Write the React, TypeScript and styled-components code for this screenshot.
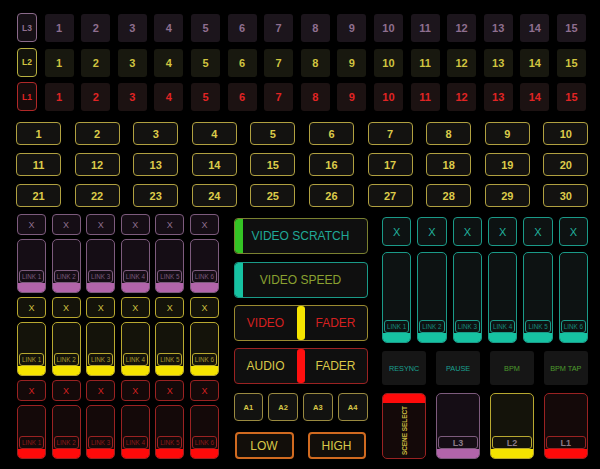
import React from "react";
import styled, { createGlobalStyle } from "styled-components";

interface Tone {
  border: string;
  bg: string;
  fill: string;
  text: string;
  dim: string;
}

const tones: Record<string, Tone> = {
  purple: { border: "#7d5b7d", bg: "#150d15", fill: "#b264aa", text: "#8f6f8f", dim: "#7a5a7a" },
  yellow: { border: "#b8a830", bg: "#14130a", fill: "#f5e400", text: "#cfc040", dim: "#a89a30" },
  red: { border: "#9a2222", bg: "#140909", fill: "#ff0a0a", text: "#d42020", dim: "#8e1a1a" },
  teal: { border: "#1a9a88", bg: "#0d1212", fill: "#16c2a2", text: "#20b09c", dim: "#178a7a" },
};

const rowTones = [
  { key: "L3", cell: "#1c151c", text: "#8f6f8f", border: "#8a6a8a", lbg: "#150f15" },
  { key: "L2", cell: "#18180f", text: "#d0c440", border: "#b8b040", lbg: "#13130b" },
  { key: "L1", cell: "#1c1212", text: "#e02424", border: "#b02828", lbg: "#150b0b" },
];

const GlobalStyle = createGlobalStyle`
  html, body {
    margin: 0;
    padding: 0;
    background: #000;
  }
  body {
    font-family: "Liberation Sans", Arial, sans-serif;
  }
`;

const Page = styled.div`
  width: 600px;
  height: 469px;
  box-sizing: border-box;
  padding: 13px 12px 0 17px;
  background: #000;
  overflow: hidden;
`;

const LayerGrid = styled.div`
  width: 569px;
  display: grid;
  grid-template-columns: 20px repeat(15, 29px);
  column-gap: 7.6px;
  row-gap: 5.5px;
  grid-auto-rows: 29px;
`;

const LayerButton = styled.div<{ $border: string; $bg: string; $color: string }>`
  box-sizing: border-box;
  border: 1.5px solid ${(p) => p.$border};
  border-radius: 4px;
  background: ${(p) => p.$bg};
  color: ${(p) => p.$color};
  font-size: 8.5px;
  font-weight: bold;
  display: flex;
  align-items: center;
  justify-content: center;
`;

const Cell = styled.div<{ $bg: string; $color: string }>`
  margin-top: 1px;
  height: 28px;
  border-radius: 3px;
  background: ${(p) => p.$bg};
  color: ${(p) => p.$color};
  font-size: 11px;
  font-weight: bold;
  display: flex;
  align-items: center;
  justify-content: center;
`;

const NumberGrid = styled.div`
  margin: 11px 0 0 -1px;
  width: 572px;
  display: grid;
  grid-template-columns: repeat(10, 45px);
  column-gap: 13.6px;
  row-gap: 8px;
  grid-auto-rows: 23px;
`;

const NumberButton = styled.div`
  box-sizing: border-box;
  border: 1.5px solid #b0a040;
  border-radius: 4px;
  background: #131210;
  color: #dccb4a;
  font-size: 11px;
  font-weight: bold;
  display: flex;
  align-items: center;
  justify-content: center;
`;

const Lower = styled.div`
  margin-top: 7px;
  width: 571px;
  display: grid;
  grid-template-columns: 202px 134px 206px;
  column-gap: 14.5px;
  align-items: start;
`;

const LeftCol = styled.div`
  display: flex;
  flex-direction: column;
  gap: 4px;
`;

const StripRow = styled.div<{ $cols: number; $gap: number }>`
  display: grid;
  grid-template-columns: repeat(${(p) => p.$cols}, 1fr);
  column-gap: ${(p) => p.$gap}px;
`;

const XButton = styled.div<{ $tone: Tone; $h: number }>`
  height: ${(p) => p.$h}px;
  box-sizing: border-box;
  border: 1px solid ${(p) => p.$tone.border};
  border-radius: 4px;
  background: ${(p) => p.$tone.bg};
  color: ${(p) => p.$tone.text};
  font-size: ${(p) => (p.$h > 25 ? 11 : 9)}px;
  display: flex;
  align-items: center;
  justify-content: center;
`;

const FaderBox = styled.div<{ $tone: Tone; $h: number }>`
  height: ${(p) => p.$h}px;
  box-sizing: border-box;
  border: 1px solid ${(p) => p.$tone.border};
  border-radius: 5px;
  background: ${(p) => p.$tone.bg};
  display: flex;
  flex-direction: column;
  justify-content: flex-end;
  overflow: hidden;
`;

const Handle = styled.div<{ $tone: Tone; $big?: boolean }>`
  margin: 0 1px;
  height: 13px;
  box-sizing: border-box;
  border: 1px solid ${(p) => p.$tone.border};
  border-radius: 3px;
  color: ${(p) => (p.$big ? "#8a7a88" : p.$tone.dim)};
  font-size: ${(p) => (p.$big ? 9 : 6.3)}px;
  font-weight: ${(p) => (p.$big ? "bold" : "normal")};
  display: flex;
  align-items: center;
  justify-content: center;
  white-space: nowrap;
`;

const Fill = styled.div<{ $tone: Tone }>`
  height: 9px;
  flex-shrink: 0;
  background: ${(p) => p.$tone.fill};
`;

const MidCol = styled.div`
  padding-top: 4px;
  display: flex;
  flex-direction: column;
`;

const WideButton = styled.div<{ $border: string; $mt: number }>`
  margin-top: ${(p) => p.$mt}px;
  height: 36px;
  box-sizing: border-box;
  border: 1.5px solid ${(p) => p.$border};
  border-radius: 4px;
  background: #0f0f0f;
  display: flex;
  align-items: stretch;
  overflow: hidden;
`;

const SideBar = styled.div<{ $color: string }>`
  width: 8px;
  flex-shrink: 0;
  background: ${(p) => p.$color};
  border-radius: 3px 0 0 3px;
`;

const CenterBar = styled.div<{ $color: string }>`
  width: 8px;
  flex-shrink: 0;
  background: ${(p) => p.$color};
  border-radius: 3px;
`;

const ButtonLabel = styled.div<{ $color: string; $offset?: boolean }>`
  flex: 1;
  padding-right: ${(p) => (p.$offset ? 8 : 0)}px;
  color: ${(p) => p.$color};
  font-size: 12px;
  display: flex;
  align-items: center;
  justify-content: center;
  white-space: nowrap;
`;

const SmallRow = styled.div`
  margin-top: 9px;
  display: grid;
  grid-template-columns: repeat(4, 1fr);
  column-gap: 5px;
`;

const SmallButton = styled.div`
  height: 28px;
  box-sizing: border-box;
  border: 1.5px solid #9a8a40;
  border-radius: 4px;
  background: #121210;
  color: #d8c848;
  font-size: 7.5px;
  font-weight: bold;
  display: flex;
  align-items: center;
  justify-content: center;
`;

const RangeRow = styled.div`
  margin-top: 11px;
  padding: 0 2px 0 1px;
  display: grid;
  grid-template-columns: 59px 58px;
  justify-content: space-between;
`;

const RangeButton = styled.div`
  height: 27px;
  box-sizing: border-box;
  border: 2px solid #d06a20;
  border-radius: 4px;
  background: #120e0a;
  color: #d8c848;
  font-size: 12px;
  display: flex;
  align-items: center;
  justify-content: center;
`;

const RightCol = styled.div`
  padding-top: 3px;
  display: flex;
  flex-direction: column;
`;

const ActionButton = styled.div<{ $color: string }>`
  height: 34px;
  border-radius: 3px;
  background: #161616;
  color: ${(p) => p.$color};
  font-size: 7.3px;
  display: flex;
  align-items: center;
  justify-content: center;
  white-space: nowrap;
`;

const SceneText = styled.div`
  flex: 1;
  display: flex;
  align-items: center;
  justify-content: center;
`;

const Vertical = styled.span`
  writing-mode: vertical-rl;
  transform: rotate(180deg);
  color: #c8b840;
  font-size: 6.4px;
  font-weight: bold;
  white-space: nowrap;
`;

const Spacer = styled.div<{ $h: number }>`
  height: ${(p) => p.$h}px;
`;

const range = (n: number, start = 1) => Array.from({ length: n }, (_, i) => i + start);

const Fader: React.FC<{ tone: Tone; h: number; label: string; big?: boolean }> = ({ tone, h, label, big }) => (
  <FaderBox $tone={tone} $h={h}>
    <Handle $tone={tone} $big={big}>
      {label}
    </Handle>
    <Fill $tone={tone} />
  </FaderBox>
);

const LeftGroup: React.FC<{ tone: Tone }> = ({ tone }) => (
  <>
    <StripRow $cols={6} $gap={5.5}>
      {range(6).map((i) => (
        <XButton key={i} $tone={tone} $h={21}>
          X
        </XButton>
      ))}
    </StripRow>
    <StripRow $cols={6} $gap={5.5}>
      {range(6).map((i) => (
        <Fader key={i} tone={tone} h={54} label={`LINK ${i}`} />
      ))}
    </StripRow>
  </>
);

const App: React.FC = () => {
  return (
    <Page>
      <GlobalStyle />
      <LayerGrid>
        {rowTones.map((r) => (
          <React.Fragment key={r.key}>
            <LayerButton $border={r.border} $bg={r.lbg} $color={r.text}>
              {r.key}
            </LayerButton>
            {range(15).map((n) => (
              <Cell key={n} $bg={r.cell} $color={r.text}>
                {n}
              </Cell>
            ))}
          </React.Fragment>
        ))}
      </LayerGrid>

      <NumberGrid>
        {range(30).map((n) => (
          <NumberButton key={n}>{n}</NumberButton>
        ))}
      </NumberGrid>

      <Lower>
        <LeftCol>
          <LeftGroup tone={tones.purple} />
          <LeftGroup tone={tones.yellow} />
          <LeftGroup tone={tones.red} />
        </LeftCol>

        <MidCol>
          <WideButton $border="#7a8030" $mt={0}>
            <SideBar $color="#34c424" />
            <ButtonLabel $color="#20a898" $offset>
              VIDEO SCRATCH
            </ButtonLabel>
          </WideButton>
          <WideButton $border="#1a9a88" $mt={8}>
            <SideBar $color="#16c2a2" />
            <ButtonLabel $color="#8aa030" $offset>
              VIDEO SPEED
            </ButtonLabel>
          </WideButton>
          <WideButton $border="#9a8a30" $mt={7}>
            <ButtonLabel $color="#d42020">VIDEO</ButtonLabel>
            <CenterBar $color="#f5e400" />
            <ButtonLabel $color="#d42020">FADER</ButtonLabel>
          </WideButton>
          <WideButton $border="#9a2222" $mt={7}>
            <ButtonLabel $color="#d8c848">AUDIO</ButtonLabel>
            <CenterBar $color="#ff1010" />
            <ButtonLabel $color="#d8c848">FADER</ButtonLabel>
          </WideButton>
          <SmallRow>
            {range(4).map((n) => (
              <SmallButton key={n}>A{n}</SmallButton>
            ))}
          </SmallRow>
          <RangeRow>
            <RangeButton>LOW</RangeButton>
            <RangeButton>HIGH</RangeButton>
          </RangeRow>
        </MidCol>

        <RightCol>
          <StripRow $cols={6} $gap={6.2}>
            {range(6).map((i) => (
              <XButton key={i} $tone={tones.teal} $h={29}>
                X
              </XButton>
            ))}
          </StripRow>
          <Spacer $h={6} />
          <StripRow $cols={6} $gap={6.2}>
            {range(6).map((i) => (
              <Fader key={i} tone={tones.teal} h={91} label={`LINK ${i}`} />
            ))}
          </StripRow>
          <Spacer $h={8} />
          <StripRow $cols={4} $gap={9.5}>
            <ActionButton $color="#1aa090">RESYNC</ActionButton>
            <ActionButton $color="#1aa090">PAUSE</ActionButton>
            <ActionButton $color="#4c9a2c">BPM</ActionButton>
            <ActionButton $color="#4c9a2c">BPM TAP</ActionButton>
          </StripRow>
          <Spacer $h={8} />
          <StripRow $cols={4} $gap={9.5}>
            <FaderBox $tone={tones.red} $h={66}>
              <Fill $tone={tones.red} />
              <SceneText>
                <Vertical>SCENE SELECT</Vertical>
              </SceneText>
            </FaderBox>
            <Fader tone={tones.purple} h={66} label="L3" big />
            <Fader tone={tones.yellow} h={66} label="L2" big />
            <Fader tone={tones.red} h={66} label="L1" big />
          </StripRow>
        </RightCol>
      </Lower>
    </Page>
  );
};

export default App;
